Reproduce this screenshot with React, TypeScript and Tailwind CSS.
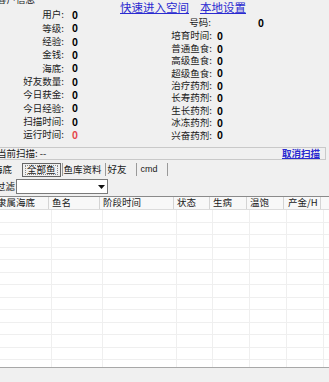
import React from "react";

const leftRows: [string, string, boolean?][] = [
  ["用户", "0"],
  ["等级", "0"],
  ["经验", "0"],
  ["金钱", "0"],
  ["海底", "0"],
  ["好友数量", "0"],
  ["今日获金", "0"],
  ["今日经验", "0"],
  ["扫描时间", "0"],
  ["运行时间", "0", true],
];

const rightRows = [
  "培育时间",
  "普通鱼食",
  "高级鱼食",
  "超级鱼食",
  "治疗药剂",
  "长寿药剂",
  "生长药剂",
  "冰冻药剂",
  "兴奋药剂",
];

const cols: [string, string][] = [
  ["隶属海底", "w-[52px] -ml-[3px] pl-0"],
  ["鱼名", "w-[51px] pl-[3px]"],
  ["阶段时间", "w-[74px] pl-[3px]"],
  ["状态", "w-[36px] pl-[3px]"],
  ["生病", "w-[37px] pl-[3px]"],
  ["温饱", "w-[37px] pl-[3px]"],
  ["产金/H", "w-[37px] pl-[4px]"],
];

const bodyCols = [
  "w-[52px]",
  "w-[51px]",
  "w-[74px]",
  "w-[36px]",
  "w-[37px]",
  "w-[37px]",
  "w-[37px]",
];

export default function App() {
  return (
    <div className="w-[329px] h-[382px] bg-[#f0f0f0] overflow-hidden text-[9.5px] leading-none text-[#1a1a1a] font-['Noto_Sans_CJK_SC','Noto_Sans',sans-serif]">
      {/* Top info section */}
      <div className="h-[147px] flex">
        {/* left column */}
        <div className="w-[165px] flex flex-col">
          <div className="h-[10px] -mt-[5px] -ml-[3px] flex items-center">客户信息</div>
          <div className="mt-[3.5px] flex flex-col">
            {leftRows.map(([l, v, red]) => (
              <div key={l} className="h-[13.33px] flex items-center">
                <span className="w-[64px] text-right">{l}:</span>
                <span className={`ml-[8px] text-[10px] font-bold ${red ? "text-[#e5484d]" : "text-black"}`}>{v}</span>
              </div>
            ))}
          </div>
        </div>
        {/* right column */}
        <div className="flex-1 flex flex-col">
          <div className="h-[15px] -ml-[45px] flex items-center gap-[11px] text-[11.5px] text-[#2a2ad0] underline">
            <span>快速进入空间</span>
            <span>本地设置</span>
          </div>
          <div className="h-[15px] flex items-center">
            <span className="w-[46px] text-right">号码:</span>
            <span className="ml-[47px] text-[10px] font-bold text-black">0</span>
          </div>
          {rightRows.map((l) => (
            <div key={l} className="h-[12.4px] flex items-center">
              <span className="w-[47px] text-right">{l}:</span>
              <span className="ml-[5px] text-[10px] font-bold text-black">0</span>
            </div>
          ))}
        </div>
      </div>

      {/* scan status frame */}
      <div className="h-[13px] -ml-[2px] w-[328px] border border-[#c9c9c9] flex items-center justify-between">
        <span className="-ml-[2px]">当前扫描: --</span>
        <span className="mr-[5px] text-[#2a2ad0] underline font-bold">取消扫描</span>
      </div>

      {/* tabs */}
      <div className="h-[17px] mt-[1px] flex items-center">
        <span className="-ml-[7px]">海底</span>
        <span className="ml-[10px] h-[14px] px-[2px] border border-[#666] flex items-center">
          <span className="border border-dotted border-[#888] px-[1px] h-[10px] flex items-center">全部鱼</span>
        </span>
        <span className="ml-[1px] w-px h-[13px] bg-[#999]"></span>
        <span className="ml-[1px]">鱼库资料</span>
        <span className="ml-[3px] w-px h-[13px] bg-[#999]"></span>
        <span className="ml-[2px]">好友</span>
        <span className="ml-[9px] w-px h-[13px] bg-[#999]"></span>
        <span className="ml-[4px] text-[9px] font-['Liberation_Sans',sans-serif]">cmd</span>
        <span className="ml-[9px] w-px h-[13px] bg-[#999]"></span>
      </div>

      {/* filter */}
      <div className="h-[17px] flex items-center">
        <span className="-ml-[4px]">过滤</span>
        <div className="ml-[1px] w-[92px] h-[15px] bg-white border border-[#7a7a7a] flex items-center justify-end pr-[2px]">
          <svg width="7" height="4" viewBox="0 0 7 4">
            <path d="M0 0 L7 0 L3.5 4 Z" fill="#111" />
          </svg>
        </div>
      </div>

      {/* table */}
      <div className="mt-[1px] h-[173px] flex flex-col">
        <div className="h-[14px] bg-[#f8f8f8] border-t border-[#8a8a8a] border-b border-b-[#dcdcdc] flex">
          {cols.map(([t, c]) => (
            <div key={t} className={`${c} h-full flex items-center border-r border-[#d4d4d4] shrink-0`}>
              {t}
            </div>
          ))}
          <div className="flex-1" />
        </div>
        <div className="h-[158px] bg-white border-b border-[#a8a8a8] flex flex-col overflow-hidden">
          {Array.from({ length: 13 }).map((_, i) => (
            <div key={i} className="h-[12.5px] shrink-0 flex border-b border-[#efefef]">
              {bodyCols.map((c, j) => (
                <div key={j} className={`${c} shrink-0 h-full border-r border-[#efefef]`} />
              ))}
              <div className="flex-1" />
            </div>
          ))}
        </div>
      </div>
    </div>
  );
}
